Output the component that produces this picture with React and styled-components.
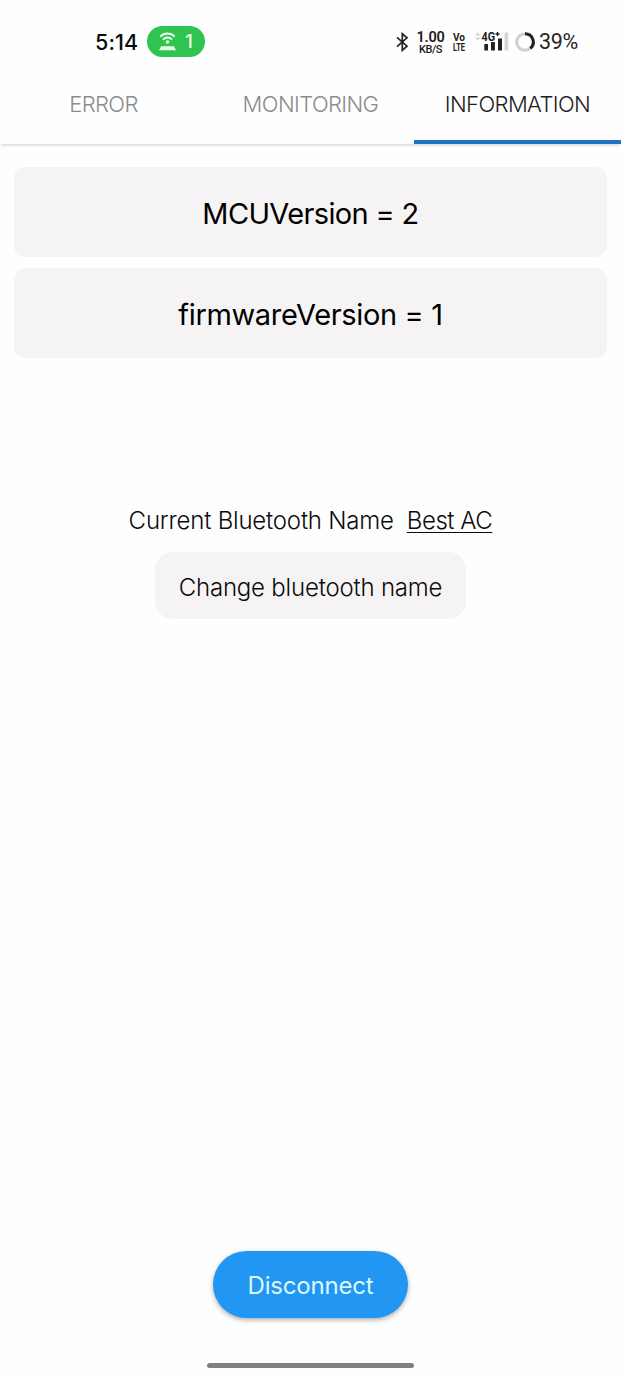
import React from "react";
import styled, { createGlobalStyle } from "styled-components";

const GlobalStyle = createGlobalStyle`
  * { box-sizing: border-box; }
  body {
    margin: 0;
    background: #fefefe;
    color: #0b0b0b;
    font-family: Inter, "Liberation Sans", sans-serif;
  }
  button {
    font-family: inherit;
    border: 0;
    padding: 0;
    background: none;
  }
`;

const Screen = styled.div`
  display: flex;
  flex-direction: column;
  width: 621px;
  height: 1380px;
  background: #fefefe;
  overflow: hidden;
`;

const StatusBar = styled.header`
  display: flex;
  align-items: center;
  height: 64px;
  padding: 19px 42px 0 95px;
  white-space: nowrap;
`;

const Clock = styled.span`
  width: 52px;
  font-size: 21.5px;
  font-weight: 500;
  letter-spacing: 0.1px;
`;

const HotspotPill = styled.span`
  display: flex;
  align-items: center;
  gap: 9px;
  width: 58px;
  height: 31px;
  padding-left: 12px;
  border-radius: 16px;
  background: #2fc34f;
  color: #e9ffe9;
  font-size: 19px;
  font-weight: 500;
`;

const StatusIcons = styled.div`
  display: flex;
  align-items: center;
  margin-left: auto;
`;

const NetSpeed = styled.span`
  display: flex;
  flex-direction: column;
  align-items: center;
  width: 29px;
  margin: 2px 0 0 7px;
  color: #1b1b1b;
  font-family: Roboto, "Liberation Sans", sans-serif;
`;

const SpeedValue = styled.span`
  font-size: 14.5px;
  line-height: 13px;
  font-weight: 600;
  letter-spacing: -0.3px;
`;

const SpeedUnit = styled.span`
  font-size: 11px;
  line-height: 11px;
  font-weight: 500;
  letter-spacing: -0.4px;
`;

const NetworkIcon = styled.svg`
  margin-left: ${(p) => p.$gap}px;
  overflow: visible;
  font-family: Roboto, "Liberation Sans", sans-serif;
  font-weight: 700;
  fill: #222;
`;

const BatteryRing = styled.svg`
  margin-left: 6px;
`;

const Percent = styled.span`
  width: 40px;
  margin-left: 4px;
  font-family: Roboto, "Liberation Sans", sans-serif;
  font-size: 21.5px;
  font-weight: 450;
  letter-spacing: -0.3px;
  color: #262626;
`;

const Tabs = styled.nav`
  display: grid;
  grid-template-columns: repeat(3, 1fr);
  height: 80px;
  box-shadow: 0 2px 3px -1px rgba(0, 0, 0, 0.2);
`;

const Tab = styled.button`
  padding-top: ${(p) => (p.$active ? 3 : 0)}px;
  padding-bottom: ${(p) => (p.$active ? 0 : 1)}px;
  border-bottom: ${(p) => (p.$active ? "4px solid #1d72c4" : "0")};
  color: ${(p) => (p.$active ? "#1c1c1c" : "#8c8c8c")};
  font-size: 22px;
  font-weight: 300;
  letter-spacing: -0.6px;
`;

const Content = styled.main`
  display: flex;
  flex: 1;
  flex-direction: column;
  align-items: center;
  padding: 23px 14px 0;
`;

const CardList = styled.section`
  display: flex;
  flex-direction: column;
  gap: 11px;
  width: 100%;
`;

const InfoCard = styled.div`
  display: flex;
  align-items: center;
  justify-content: center;
  height: 90px;
  padding-top: 2px;
  border-radius: 12px;
  background: #f5f3f4;
  color: #000;
  font-size: 29px;
  font-weight: 400;
  letter-spacing: ${(p) => p.$track}px;
  white-space: nowrap;
`;

const NameRow = styled.div`
  display: flex;
  gap: 13px;
  margin-top: 148px;
  line-height: 30px;
  font-size: 24px;
  font-weight: 300;
  white-space: nowrap;
`;

const NameLabel = styled.span`
  letter-spacing: -0.2px;
`;

const DeviceName = styled.span`
  text-decoration: underline;
  text-decoration-thickness: 1px;
  text-underline-offset: 3px;
  letter-spacing: -0.45px;
`;

const RenameButton = styled.button`
  width: 311px;
  height: 67px;
  margin-top: 16px;
  padding-top: 3px;
  border-radius: 18px;
  background: #f5f3f4;
  color: #0b0b0b;
  font-size: 24px;
  font-weight: 300;
  letter-spacing: -0.2px;
`;

const Footer = styled.footer`
  display: flex;
  flex-direction: column;
  align-items: center;
  height: 129px;
`;

const DisconnectButton = styled.button`
  width: 195px;
  height: 67px;
  padding-top: 2px;
  border-radius: 34px;
  background: #2196f3;
  box-shadow: 0 2px 5px rgba(0, 0, 0, 0.32);
  color: #dcf8ff;
  font-size: 24px;
  font-weight: 400;
  letter-spacing: -0.2px;
`;

const HomeIndicator = styled.div`
  width: 207px;
  height: 5px;
  margin-top: 45px;
  border-radius: 3px;
  background: #808080;
`;

const tabs = [
  { label: "ERROR" },
  { label: "MONITORING" },
  { label: "INFORMATION", active: true },
];

const cards = [
  { text: "MCUVersion = 2", track: -0.65 },
  { text: "firmwareVersion = 1", track: -0.35 },
];

function HotspotIcon() {
  return (
    <svg width="17" height="19" viewBox="0 0 17 19" fill="none" stroke="#e9ffe9">
      <path d="M1.3 4.6C5.1.4 11.9.4 15.7 4.6" strokeWidth="2" />
      <path d="M4 7.6C6.4 4.8 10.6 4.8 13 7.6" strokeWidth="1.9" />
      <circle cx="8.5" cy="10" r="1.8" fill="#e9ffe9" stroke="none" />
      <path d="M2.2 14.2H14.8L17 18.2H0Z" fill="#e9ffe9" stroke="none" />
    </svg>
  );
}

function BluetoothIcon() {
  return (
    <svg width="13" height="20" viewBox="0 0 13 20" fill="none" stroke="#222" strokeWidth="1.7">
      <path d="M1 5.4L11 14.2L6.3 18.3V1.7L11 5.8L1 14.6" />
    </svg>
  );
}

function VoLte() {
  return (
    <NetworkIcon $gap={7} width="14" height="22" viewBox="0 0 14 22">
      <text x="1" y="9.5" fontSize="11" textLength="12" lengthAdjust="spacingAndGlyphs">Vo</text>
      <text x="1" y="19.5" fontSize="11.5" textLength="12" lengthAdjust="spacingAndGlyphs">LTE</text>
    </NetworkIcon>
  );
}

function Signal() {
  return (
    <NetworkIcon $gap={9} width="34" height="22" viewBox="0 0 34 22">
      <path d="M0 4.6L2.8 1.4L5.6 4.6ZM0 6.4L2.8 9.6L5.6 6.4Z" fill="#d2d2d2" />
      <rect x="9.3" y="13" width="3.7" height="6.5" />
      <rect x="16" y="11" width="3.9" height="8.5" />
      <rect x="23" y="7.5" width="4" height="12" />
      <rect x="29.6" y="1.5" width="3.6" height="18" fill="#d5d5d5" />
      <text x="6.6" y="9.8" fontSize="12" textLength="13.5" lengthAdjust="spacingAndGlyphs">4G</text>
      <path d="M22.5 1V5M20.5 3H24.5" stroke="#222" strokeWidth="1.4" />
    </NetworkIcon>
  );
}

export default function App() {
  return (
    <Screen>
      <GlobalStyle />
      <StatusBar>
        <Clock>5:14</Clock>
        <HotspotPill>
          <HotspotIcon />
          <span>1</span>
        </HotspotPill>
        <StatusIcons>
          <BluetoothIcon />
          <NetSpeed>
            <SpeedValue>1.00</SpeedValue>
            <SpeedUnit>KB/S</SpeedUnit>
          </NetSpeed>
          <VoLte />
          <Signal />
          <BatteryRing width="20" height="20" viewBox="0 0 20 20" fill="none" strokeWidth="3">
            <circle cx="10" cy="10" r="8.3" stroke="#d0d0d0" />
            <path d="M10 1.7A8.3 8.3 0 0 1 15.3 16.4" stroke="#222" />
          </BatteryRing>
          <Percent>39%</Percent>
        </StatusIcons>
      </StatusBar>
      <Tabs>
        {tabs.map((t) => (
          <Tab key={t.label} $active={t.active}>
            {t.label}
          </Tab>
        ))}
      </Tabs>
      <Content>
        <CardList>
          {cards.map((c) => (
            <InfoCard key={c.text} $track={c.track}>
              {c.text}
            </InfoCard>
          ))}
        </CardList>
        <NameRow>
          <NameLabel>Current Bluetooth Name</NameLabel>
          <DeviceName>Best AC</DeviceName>
        </NameRow>
        <RenameButton>Change bluetooth name</RenameButton>
      </Content>
      <Footer>
        <DisconnectButton>Disconnect</DisconnectButton>
        <HomeIndicator />
      </Footer>
    </Screen>
  );
}
